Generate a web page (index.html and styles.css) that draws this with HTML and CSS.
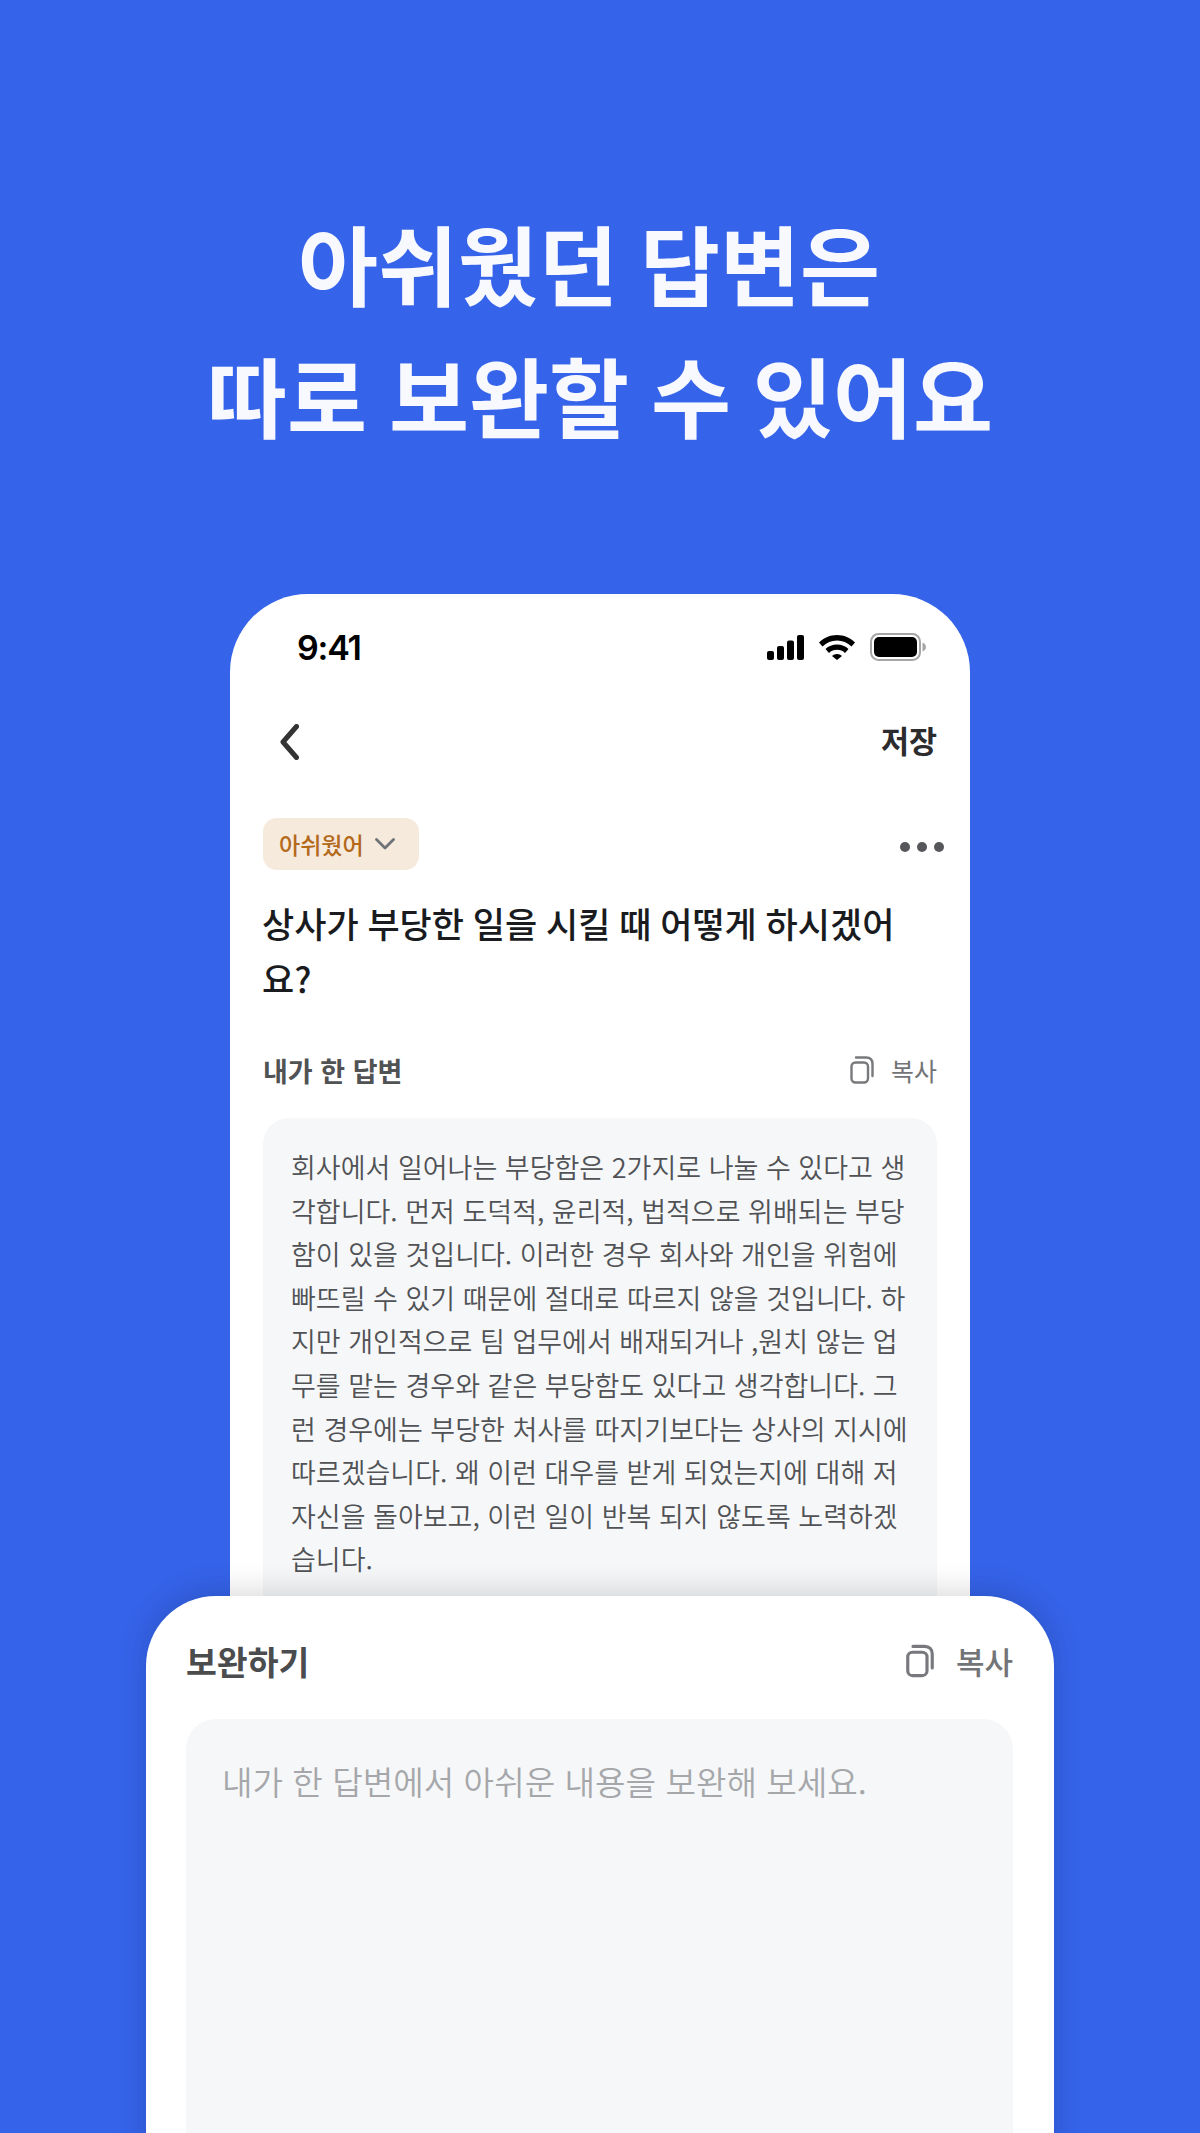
FILE: index.html
```html
<!DOCTYPE html>
<html lang="ko">
<head>
<meta charset="utf-8">
<title>아쉬웠던 답변은 따로 보완할 수 있어요</title>
<link rel="stylesheet" href="styles.css">
</head>
<body>
<main class="stage">
  <h1 class="headline">아쉬웠던 답변은&nbsp;<br>따로 보완할 수 있어요</h1>
  <section class="phone">
    <div class="status">
      <span class="time">9:41</span>
      <div class="status-icons">
        <svg class="ic-signal" viewBox="0 0 37 25"><rect x="0" y="16" width="7" height="9" rx="2"/><rect x="10" y="11" width="7" height="14" rx="2"/><rect x="20" y="5.500" width="7" height="19.500" rx="2"/><rect x="30" y="0" width="7" height="25" rx="2"/></svg>
        <svg class="ic-wifi" viewBox="0 0 36 25"><path d="M18 0C25 0 31 2.700 36 7.500L32.500 11.500C28.500 7.700 23.500 5.500 18 5.500C12.500 5.500 7.500 7.700 3.500 11.500L0 7.500C5 2.700 11 0 18 0Z"/><path d="M18 9.500C22.500 9.500 26.500 11.200 29.500 14L26 18C24 16 21 14.800 18 14.800C15 14.800 12 16 10 18L6.500 14C9.500 11.200 13.500 9.500 18 9.500Z"/><path d="M18 19C20 19 21.700 19.700 23 21L18 25L13 21C14.300 19.700 16 19 18 19Z"/></svg>
        <svg class="ic-battery" viewBox="0 0 56 28"><rect x="1" y="1" width="49" height="26" rx="7.500" fill="none" stroke="#a6a6a6" stroke-width="2"/><rect x="4" y="4" width="43" height="20" rx="5"/><path d="M52.500 9.500C54.500 10.300 56 12 56 14C56 16 54.500 17.700 52.500 18.500Z" fill="#a6a6a6"/></svg>
      </div>
    </div>
    <div class="nav">
      <svg class="ic-back" viewBox="0 0 19 36"><path d="M16.500 2.500L3 18L16.500 33.500" fill="none" stroke="#333" stroke-width="5" stroke-linecap="round" stroke-linejoin="round"/></svg>
      <span class="save">저장</span>
    </div>
    <div class="tag-row">
      <div class="tag">
        <span>아쉬웠어</span>
        <svg class="ic-down" viewBox="0 0 20 12"><path d="M1.500 1.500L10 10L18.500 1.500" fill="none" stroke="#6f7378" stroke-width="2.800" stroke-linecap="round" stroke-linejoin="round"/></svg>
      </div>
      <div class="dots"><i></i><i></i><i></i></div>
    </div>
    <h2 class="question">상사가 부당한 일을 시킬 때 어떻게 하시겠어<br>요?</h2>
    <div class="row">
      <span class="row-title">내가 한 답변</span>
      <span class="copy">
        <svg class="ic-copy" viewBox="0 0 24 28"><path d="M6 1.500H16C20 1.500 22.500 4 22.500 8V20" fill="none" stroke="#77797c" stroke-width="2.400" stroke-linecap="round"/><rect x="1.500" y="6.500" width="16.500" height="20" rx="4" fill="none" stroke="#77797c" stroke-width="2.400"/></svg>
        복사
      </span>
    </div>
    <div class="answer">회사에서 일어나는 부당함은 2가지로 나눌 수 있다고 생<br>각합니다. 먼저 도덕적, 윤리적, 법적으로 위배되는 부당<br>함이 있을 것입니다. 이러한 경우 회사와 개인을 위험에<br>빠뜨릴 수 있기 때문에 절대로 따르지 않을 것입니다. 하<br>지만 개인적으로 팀 업무에서 배재되거나 ,원치 않는 업<br>무를 맡는 경우와 같은 부당함도 있다고 생각합니다. 그<br>런 경우에는 부당한 처사를 따지기보다는 상사의 지시에<br>따르겠습니다. 왜 이런 대우를 받게 되었는지에 대해 저<br>자신을 돌아보고, 이런 일이 반복 되지 않도록 노력하겠<br>습니다.</div>
  </section>
  <section class="sheet">
    <div class="sheet-head">
      <span class="sheet-title">보완하기</span>
      <span class="copy copy-lg">
        <svg class="ic-copy" viewBox="0 0 24 28"><path d="M6 1.500H16C20 1.500 22.500 4 22.500 8V20" fill="none" stroke="#77797c" stroke-width="2.700" stroke-linecap="round"/><rect x="1.500" y="6.500" width="16.500" height="20" rx="4" fill="none" stroke="#77797c" stroke-width="2.700"/></svg>
        복사
      </span>
    </div>
    <div class="field">내가 한 답변에서 아쉬운 내용을 보완해 보세요.</div>
  </section>
</main>
</body>
</html>
```
FILE: styles.css
```css
* { box-sizing: border-box; margin: 0; padding: 0; }
html, body { height: 100%; }
body {
  background: #3563e9;
  font-family: "Noto Sans CJK KR", "Noto Sans", sans-serif;
  color: #1c1c1e;
}
.stage {
  position: relative;
  width: 1200px;
  height: 2133px;
  overflow: hidden;
  background: #3563e9;
  display: flex;
  flex-direction: column;
  align-items: center;
}
.headline {
  margin-top: 196px;
  font-size: 87px;
  line-height: 132px;
  font-weight: 700;
  word-spacing: -2.500px;
  color: #f8f9ff;
  text-align: center;
  white-space: nowrap;
}
.phone {
  margin-top: 134px;
  width: 740px;
  flex: none;
  height: 1100px;
  background: #fff;
  border-radius: 78px 78px 0 0;
  padding: 0 33px;
}
.status {
  display: flex;
  justify-content: space-between;
  align-items: center;
  height: 106px;
  padding: 0 11px 0 34px;
}
.time {
  font-family: Inter, "Noto Sans", sans-serif;
  font-size: 34px;
  font-weight: 600;
  color: #000;
  letter-spacing: -1.200px;
}
.status-icons { display: flex; align-items: center; gap: 15px; }
.ic-signal { width: 37px; height: 25px; }
.ic-wifi { width: 36px; height: 25px; }
.ic-battery { width: 56px; height: 28px; }
.nav {
  display: flex;
  justify-content: space-between;
  align-items: center;
  height: 58px;
  margin-top: 13px;
  padding-left: 17px;
}
.ic-back { width: 19px; height: 36px; }
.save { font-size: 30.500px; font-weight: 700; color: #2c2c2e; margin-bottom: 4px; }
.tag-row {
  display: flex;
  justify-content: space-between;
  align-items: center;
  margin-top: 47px;
}
.tag {
  display: flex;
  align-items: center;
  gap: 11px;
  height: 52px;
  width: 156px;
  padding-left: 16px;
  background: #f6eadd;
  border-radius: 14px;
  font-size: 23px;
  font-weight: 500;
  color: #b3681a;
}
.ic-down { width: 20px; height: 12px; }
.dots { display: flex; gap: 7px; margin-right: -7px; margin-top: 6px; }
.dots i { width: 10px; height: 10px; border-radius: 50%; background: #55575a; }
.question {
  margin-top: 25px;
  margin-left: -1px;
  font-size: 35px;
  line-height: 55px;
  font-weight: 500;
  word-spacing: -1px;
  color: #191b1e;
  white-space: nowrap;
}
.row {
  display: flex;
  justify-content: space-between;
  align-items: center;
  margin-top: 47px;
  height: 36px;
}
.row-title { font-size: 27px; font-weight: 700; color: #505254; }
.copy {
  display: flex;
  align-items: center;
  gap: 17px;
  font-size: 25px;
  font-weight: 400;
  color: #727477;
}
.ic-copy { width: 24px; height: 28px; }
.answer {
  margin-top: 30px;
  height: 600px;
  padding: 27px 20px 0 28px;
  background: #f6f7f9;
  border-radius: 26px;
  font-size: 27px;
  font-weight: 350;
  line-height: 43.600px;
  color: #505255;
  white-space: nowrap;
}
.sheet {
  position: absolute;
  left: 146px;
  top: 1596px;
  width: 908px;
  height: 640px;
  background: #fff;
  border-radius: 70px 70px 0 0;
  padding: 0 41px 0 40px;
  box-shadow: 0 -6px 30px rgba(0, 0, 0, 0.14);
}
.sheet-head {
  display: flex;
  justify-content: space-between;
  align-items: center;
  height: 123px;
  padding-top: 6px;
}
.sheet-title { font-size: 33.500px; font-weight: 700; color: #4a4c4e; }
.copy-lg { font-size: 31px; gap: 22px; font-weight: 500; }
.copy-lg .ic-copy { width: 28px; height: 34px; }
.field {
  height: 600px;
  padding: 37px 36px;
  background: #f6f7f9;
  border-radius: 30px;
  font-size: 33.200px;
  font-weight: 350;
  color: #a5a7aa;
  white-space: nowrap;
}
```
